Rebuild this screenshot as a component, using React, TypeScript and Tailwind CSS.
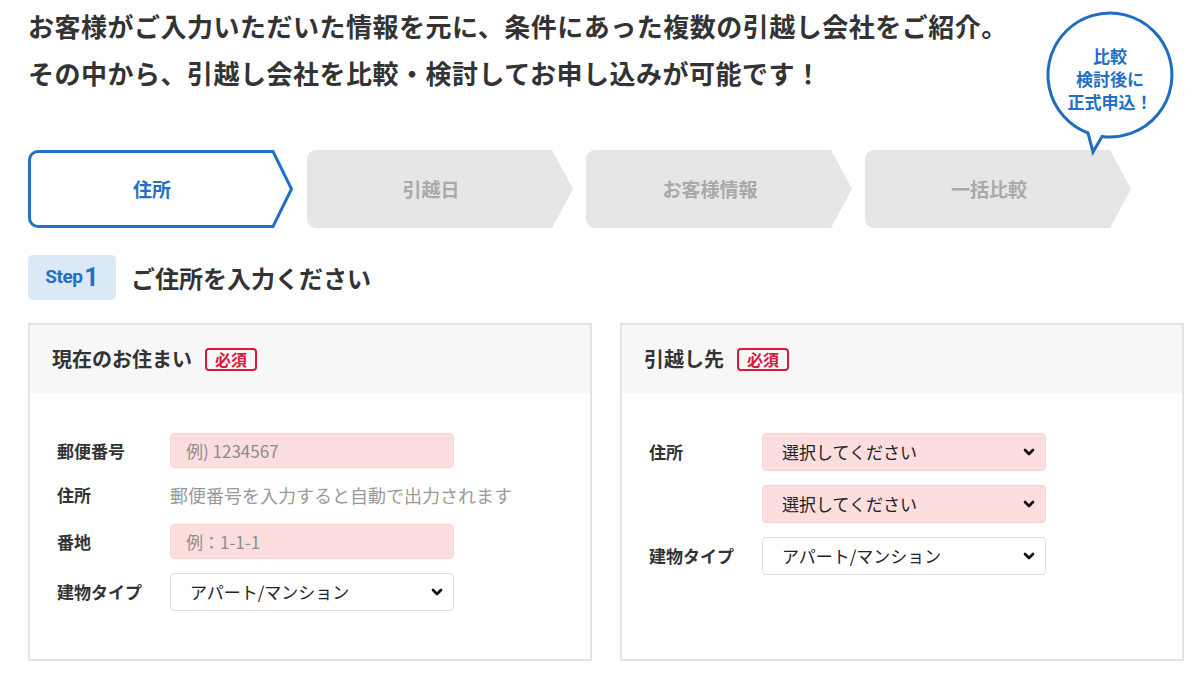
import { ChevronDown } from 'lucide-react';

const jp = { fontFamily: '"Noto Sans CJK JP", "Noto Sans", sans-serif' };

const steps = ['住所', '引越日', 'お客様情報', '一括比較'];

function StepShape({ active }: { active: boolean }) {
  if (active) {
    return (
      <svg className="absolute inset-0" width="266" height="78" viewBox="0 0 266 78">
        <path
          d="M10 1.5 H245 L263.5 39 L245 76.5 H10 A8.5 8.5 0 0 1 1.5 68 V10 A8.5 8.5 0 0 1 10 1.5 Z"
          fill="#fff"
          stroke="#2371c4"
          strokeWidth="3"
          strokeLinejoin="round"
        />
      </svg>
    );
  }
  return (
    <svg className="absolute inset-0" width="266" height="78" viewBox="0 0 266 78">
      <path d="M9 0 H245 L266 39 L245 78 H9 A9 9 0 0 1 0 69 V9 A9 9 0 0 1 9 0 Z" fill="#e6e6e6" />
    </svg>
  );
}

function Bubble() {
  return (
    <div className="absolute left-[1040px] top-0 w-[140px] h-[160px]">
      <svg className="absolute inset-0" width="140" height="160" viewBox="0 0 140 160">
        <path
          d="M62 136.5 A62 62 0 1 0 48 133 L53 152 Z"
          fill="#fff"
          stroke="#1f6cc1"
          strokeWidth="3"
          strokeLinejoin="miter"
        />
      </svg>
      <div className="absolute left-0 top-[44px] w-full text-center text-[17px] leading-[23px] font-bold text-[#2070c4]">
        <div>比較</div>
        <div>検討後に</div>
        <div>正式申込！</div>
      </div>
    </div>
  );
}

function Required() {
  return (
    <span className="ml-[13px] inline-flex items-center h-[23px] px-[8px] border-2 border-[#d8193d] rounded-[4px] text-[16px] font-bold text-[#d8193d] leading-none">
      必須
    </span>
  );
}

function Select({ value, pink }: { value: string; pink?: boolean }) {
  return (
    <div className="relative w-[284px]">
      <select
        defaultValue={value}
        className={`w-full h-[38px] appearance-none rounded-[4px] pl-[19px] pr-8 text-[17px] text-[#222] outline-none ${
          pink ? 'bg-[#fddede] border border-[#f7d4d4]' : 'bg-white border border-[#dedede]'
        }`}
        style={jp}
      >
        <option>{value}</option>
      </select>
      <ChevronDown className="pointer-events-none absolute right-[9px] top-[11px] w-[16px] h-[16px] text-[#111]" strokeWidth={4} />
    </div>
  );
}

function TextInput({ placeholder }: { placeholder: string }) {
  return (
    <input
      placeholder={placeholder}
      className="w-[284px] h-[35px] rounded-[4px] bg-[#fddede] border border-[#f7d4d4] pl-[15px] text-[17px] text-[#222] placeholder:text-[#8c8c8c] outline-none"
      style={jp}
    />
  );
}

function Row({ label, children, className = '' }: { label: string; children: React.ReactNode; className?: string }) {
  return (
    <div className={`flex items-center ${className}`}>
      <div className="w-[113px] text-[17px] font-bold text-[#333]">{label}</div>
      {children}
    </div>
  );
}

function Panel({ title, children }: { title: string; children: React.ReactNode }) {
  return (
    <div className="border-2 border-[#e4e4e4] bg-white flex flex-col">
      <div className="h-[68px] bg-[#f7f7f7] flex items-center pl-[22px]">
        <span className="text-[20px] font-bold text-[#333]">{title}</span>
        <Required />
      </div>
      <div className="pt-[40px] pb-[48px] pl-[27px]">{children}</div>
    </div>
  );
}

export default function App() {
  return (
    <div className="relative w-[1200px] h-[681px] bg-white overflow-hidden" style={jp}>
      <div className="pl-[28px] pt-[2px] text-[26px] leading-[47px] tracking-[0.5px] font-bold text-[#333]">
        <p>お客様がご入力いただいた情報を元に、条件にあった複数の引越し会社をご紹介。</p>
        <p>その中から、引越し会社を比較・検討してお申し込みが可能です！</p>
      </div>

      <div className="mt-[54px] ml-[28px] flex gap-[13px]">
        {steps.map((s, i) => (
          <div key={s} className="relative w-[266px] h-[78px]">
            <StepShape active={i === 0} />
            <div
              className={`relative h-full flex items-center justify-center pr-[18px] text-[19px] font-bold ${
                i === 0 ? 'text-[#2371c4]' : 'text-[#a9a9a9]'
              }`}
            >
              {s}
            </div>
          </div>
        ))}
      </div>

      <Bubble />

      <div className="mt-[27px] ml-[28px] flex items-center">
        <div className="w-[88px] h-[45px] rounded-[5px] bg-[#dbe8f6] flex items-center justify-center text-[#2371c4] font-bold">
          <span className="text-[19px] tracking-[-0.5px]" style={{ fontFamily: 'Roboto, sans-serif' }}>Step</span>
          <span className="text-[25px] leading-none ml-[2px]" style={{ fontFamily: 'Roboto, sans-serif' }}>1</span>
        </div>
        <h2 className="ml-[15px] text-[24px] font-bold text-[#333]">ご住所を入力ください</h2>
      </div>

      <div className="mt-[23px] mx-[28px] w-[1156px] grid grid-cols-2 gap-[28px]">
        <Panel title="現在のお住まい">
          <Row label="郵便番号">
            <TextInput placeholder="例) 1234567" />
          </Row>
          <Row label="住所" className="mt-[9px] h-[36px]">
            <span className="text-[18px] text-[#999]">郵便番号を入力すると自動で出力されます</span>
          </Row>
          <Row label="番地" className="mt-[11px]">
            <TextInput placeholder="例：1-1-1" />
          </Row>
          <Row label="建物タイプ" className="mt-[14px]">
            <Select value="アパート/マンション" />
          </Row>
        </Panel>
        <Panel title="引越し先">
          <Row label="住所">
            <Select value="選択してください" pink />
          </Row>
          <Row label="" className="mt-[14px]">
            <Select value="選択してください" pink />
          </Row>
          <Row label="建物タイプ" className="mt-[14px]">
            <Select value="アパート/マンション" />
          </Row>
        </Panel>
      </div>
    </div>
  );
}
